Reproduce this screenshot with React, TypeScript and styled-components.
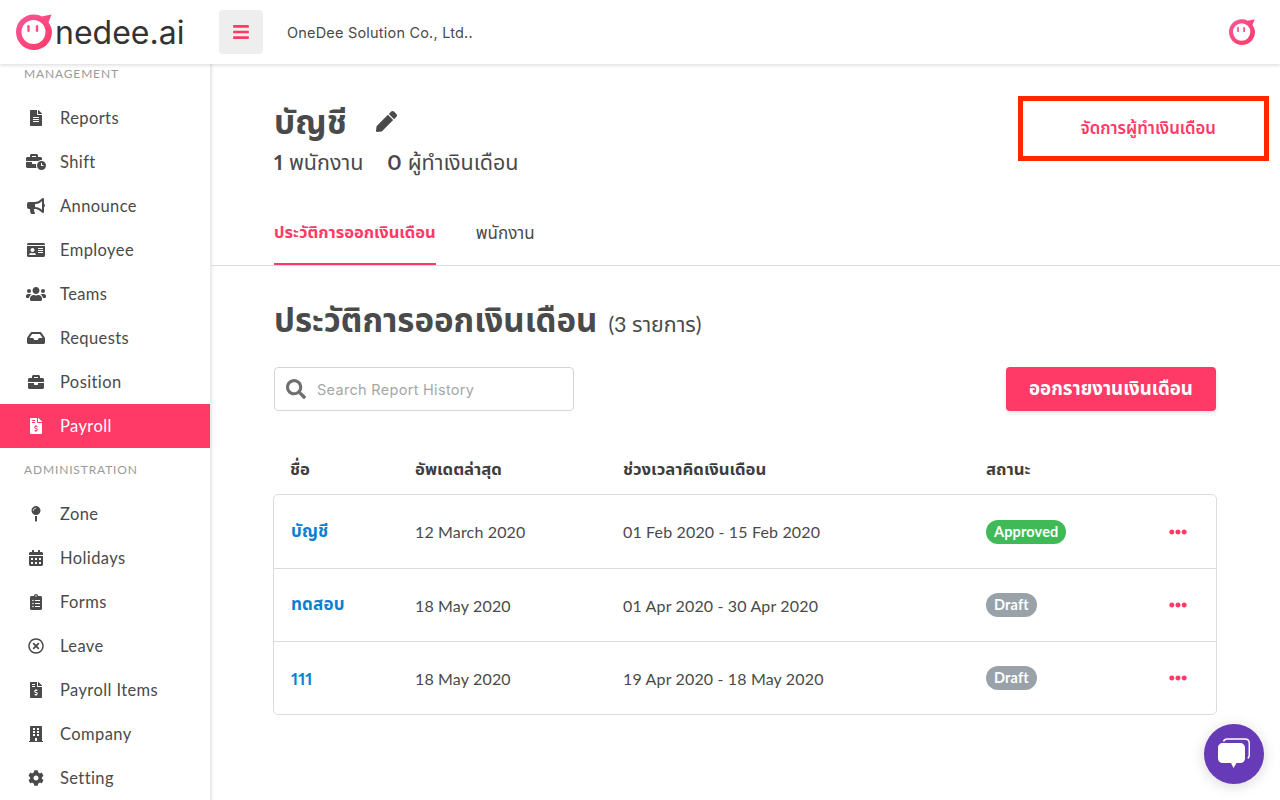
import styled, { createGlobalStyle } from "styled-components";
import type { IconType } from "react-icons";
import {
  FaBars,
  FaBriefcase,
  FaBullhorn,
  FaBuilding,
  FaBusinessTime,
  FaCalendarAlt,
  FaClipboardList,
  FaCog,
  FaEllipsisH,
  FaFileAlt,
  FaFileInvoiceDollar,
  FaIdCard,
  FaInbox,
  FaMapPin,
  FaPen,
  FaRegTimesCircle,
  FaSearch,
  FaUsers,
} from "react-icons/fa";

const PINK = "#ff3a66";
const FONT = `"Lato", "Noto Sans", "Noto Sans Thai", sans-serif`;

const GlobalStyle = createGlobalStyle`
  html, body {
    margin: 0;
    height: 100%;
    overflow: hidden;
    background: #fff;
    font-family: ${FONT};
    color: #4a4a4a;
  }
  * {
    box-sizing: border-box;
  }
`;

const Page = styled.div`
  position: relative;
  display: flex;
  flex-direction: column;
  height: 800px;
  overflow: hidden;
`;

const Header = styled.header`
  position: relative;
  z-index: 2;
  display: flex;
  align-items: center;
  flex: 0 0 64px;
  padding: 0 25px 0 16px;
  background: #fff;
  box-shadow: 0 1px 4px rgba(0, 0, 0, 0.16);
`;

const Logo = styled.div`
  display: flex;
  align-items: center;
  width: 203px;
`;

const LogoText = styled.span`
  margin-left: 3px;
  font-family: "Inter", sans-serif;
  font-size: 32px;
  font-weight: 400;
  color: #333;
`;

const MenuButton = styled.button`
  display: flex;
  align-items: center;
  justify-content: center;
  width: 44px;
  height: 44px;
  padding: 0;
  border: 0;
  border-radius: 4px;
  background: #eeeeee;
  color: ${PINK};
  font-size: 18px;
`;

const CompanyName = styled.span`
  margin-left: 24px;
  font-family: "Inter", sans-serif;
  font-size: 14.5px;
  letter-spacing: 0.2px;
  color: #4a4a4a;
`;

const HeaderAvatar = styled.div`
  display: flex;
  margin-left: auto;
`;

const Body = styled.div`
  display: flex;
  flex: 1;
  min-height: 0;
`;

const Sidebar = styled.nav`
  flex: 0 0 211px;
  overflow: hidden;
  background: #fff;
  border-right: 1px solid #eaeaea;
  box-shadow: 1px 0 3px rgba(0, 0, 0, 0.1);
`;

const SectionLabel = styled.div<{ $first?: boolean }>`
  display: flex;
  align-items: center;
  height: ${({ $first }) => ($first ? "32px" : "44px")};
  padding: ${({ $first }) => ($first ? "0 0 13px 24px" : "0 0 2px 24px")};
  font-size: 12px;
  letter-spacing: 0.85px;
  color: #9a9a9a;
`;

const NavItem = styled.div<{ $active?: boolean }>`
  display: flex;
  align-items: center;
  height: 44px;
  padding-left: 26px;
  font-size: 16.5px;
  letter-spacing: 0.4px;
  background: ${({ $active }) => ($active ? PINK : "transparent")};
  color: ${({ $active }) => ($active ? "#fff" : "#4a4a4a")};
`;

const NavIcon = styled.span<{ $size: number }>`
  display: flex;
  align-items: center;
  justify-content: center;
  flex: 0 0 20px;
  margin-right: 14px;
  font-size: ${({ $size }) => $size}px;
`;

const Main = styled.main`
  flex: 1;
  min-width: 0;
`;

const Summary = styled.section`
  display: flex;
  justify-content: space-between;
  padding: 34px 64px 0 63px;
`;

const TitleRow = styled.div`
  display: flex;
  align-items: center;
  height: 46px;
`;

const Title = styled.h1`
  margin: 0;
  font-size: 33.5px;
  line-height: 46px;
  font-weight: 700;
  color: #4a4a4a;
`;

const EditIcon = styled.span`
  display: flex;
  margin-left: 29px;
  font-size: 21px;
  color: #4a4a4a;
`;

const Stats = styled.div`
  display: flex;
  gap: 24px;
  margin-top: 3px;
  font-size: 21.5px;
  line-height: 30px;
  font-variant-numeric: proportional-nums;
`;

const Stat = styled.span`
  strong {
    font-weight: 700;
    margin-right: 6px;
  }
`;

const ManageLink = styled.a`
  padding-top: 18px;
  font-size: 16.75px;
  font-weight: 600;
  color: ${PINK};
`;

const Tabs = styled.div`
  display: flex;
  gap: 40px;
  height: 66px;
  margin-top: 23px;
  padding-left: 63px;
  border-bottom: 1px solid #dcdcdc;
`;

const Tab = styled.div<{ $active?: boolean }>`
  display: flex;
  align-items: center;
  height: 65px;
  padding-top: 2px;
  margin-bottom: -1px;
  font-size: ${({ $active }) => ($active ? "16.5px" : "17px")};
  font-weight: ${({ $active }) => ($active ? 700 : 400)};
  color: ${({ $active }) => ($active ? PINK : "#4a4a4a")};
  border-bottom: ${({ $active }) => ($active ? `2px solid ${PINK}` : "0")};
`;

const Content = styled.section`
  padding: 31px 64px 0 63px;
`;

const SectionTitle = styled.div`
  display: flex;
  align-items: baseline;
  gap: 11px;
  height: 46px;
`;

const Heading = styled.h2`
  margin: 0;
  font-size: 33px;
  font-weight: 700;
  color: #4a4a4a;
`;

const Count = styled.span`
  font-size: 21.4px;
  color: #4a4a4a;
`;

const Toolbar = styled.div`
  display: flex;
  justify-content: space-between;
  margin-top: 24px;
`;

const SearchBox = styled.label`
  display: flex;
  align-items: center;
  width: 300px;
  height: 44px;
  padding-left: 11px;
  border: 1px solid #d5d5d5;
  border-radius: 4px;
  font-size: 20px;
  color: #6f6f6f;
`;

const SearchInput = styled.input`
  flex: 1;
  min-width: 0;
  margin-left: 9px;
  border: 0;
  outline: 0;
  background: transparent;
  font-family: "Inter", sans-serif;
  font-size: 14.5px;
  letter-spacing: 0.3px;

  &::placeholder {
    color: #a6a6a6;
    opacity: 1;
  }
`;

const PrimaryButton = styled.button`
  width: 210px;
  height: 44px;
  border: 0;
  border-radius: 4px;
  background: ${PINK};
  color: #fff;
  font-family: ${FONT};
  font-size: 18.7px;
  font-weight: 700;
  box-shadow: 0 2px 4px rgba(0, 0, 0, 0.12);
`;

const TableHead = styled.div`
  display: grid;
  grid-template-columns: 125px 208px 363px 1fr;
  align-items: center;
  height: 83px;
  padding: 35px 0 0 16px;
  font-size: 16.7px;
  font-weight: 700;
  color: #3d3d3d;
`;

const Table = styled.div`
  margin-left: -1px;
  margin-right: -1px;
  border: 1px solid #dcdcdc;
  border-radius: 5px;
`;

const Row = styled.div`
  display: grid;
  grid-template-columns: 124px 208px 363px 183px 1fr;
  align-items: center;
  height: 73px;
  padding: 0 30px 0 17px;
  font-size: 16px;
  letter-spacing: 0.15px;
  color: #4a4a4a;

  & + & {
    border-top: 1px solid #dcdcdc;
  }
`;

const NameLink = styled.a`
  font-size: 17px;
  font-weight: 700;
  font-variant-numeric: proportional-nums;
  color: #0b7fd1;
`;

const Badge = styled.span<{ $color: string }>`
  justify-self: start;
  padding: 0 8px;
  height: 24px;
  line-height: 23px;
  border-radius: 12px;
  background: ${({ $color }) => $color};
  color: #fff;
  font-size: 14.5px;
  font-weight: 700;
`;

const RowMenu = styled.span`
  display: flex;
  justify-self: end;
  color: ${PINK};
  font-size: 18px;
`;

const RedFrame = styled.div`
  position: absolute;
  top: 96px;
  left: 1018px;
  width: 251px;
  height: 65px;
  border: 5px solid #ff2600;
`;

const ChatBubble = styled.div`
  position: absolute;
  right: 16px;
  bottom: 16px;
  display: flex;
  align-items: center;
  justify-content: center;
  width: 60px;
  height: 60px;
  border-radius: 50%;
  background: #673ab7;
  box-shadow: 0 2px 14px rgba(0, 0, 0, 0.16);
`;

const Face = ({ size }: { size: number }) => (
  <svg width={size} height={size} viewBox="0 0 36 36">
    <defs>
      <linearGradient id="faceRing" x1="0" y1="0" x2="1" y2="1">
        <stop offset="0" stopColor="#f9569a" />
        <stop offset="1" stopColor="#ff3a66" />
      </linearGradient>
    </defs>
    <path
      d="M18 0.500c2.700 0 5.300 0.700 7.600 1.900L35.500 0.500l-3 8C34.500 11.200 36 14.500 36 18c0 9.900-8 18-18 18S0 27.900 0 18 8 0.500 18 0.500z"
      fill="url(#faceRing)"
    />
    <circle cx="17.500" cy="18" r="12" fill="#fff" />
    <rect x="11.300" y="11" width="2.400" height="7" rx="1.200" fill="#ff4d80" />
    <rect x="19.800" y="11" width="2.400" height="7" rx="1.200" fill="#ff4d80" />
  </svg>
);

const ChatIcon = () => (
  <svg width="32" height="32" viewBox="0 0 32 32">
    <path
      d="M5.500 3.500C6 1.800 7.500 1 9.500 1H27c2.800 0 4.300 1.800 4.300 4.500V17c0 1.400-0.500 2.600-1.500 3.300"
      fill="none"
      stroke="#fff"
      strokeWidth="1.500"
    />
    <path
      d="M5 5h17c3 0 5 2 5 5v10c0 3-2 5-5 5h-3.500L15.500 30 13 25H5c-3 0-5-2-5-5V10c0-3 2-5 5-5z"
      fill="#fff"
    />
  </svg>
);

type NavEntry = { label: string; icon: IconType; size?: number; active?: boolean };

const managementItems: NavEntry[] = [
  { label: "Reports", icon: FaFileAlt },
  { label: "Shift", icon: FaBusinessTime, size: 20 },
  { label: "Announce", icon: FaBullhorn, size: 18 },
  { label: "Employee", icon: FaIdCard, size: 18 },
  { label: "Teams", icon: FaUsers, size: 20 },
  { label: "Requests", icon: FaInbox, size: 18 },
  { label: "Position", icon: FaBriefcase },
  { label: "Payroll", icon: FaFileInvoiceDollar, active: true },
];

const adminItems: NavEntry[] = [
  { label: "Zone", icon: FaMapPin },
  { label: "Holidays", icon: FaCalendarAlt },
  { label: "Forms", icon: FaClipboardList },
  { label: "Leave", icon: FaRegTimesCircle },
  { label: "Payroll Items", icon: FaFileInvoiceDollar },
  { label: "Company", icon: FaBuilding },
  { label: "Setting", icon: FaCog },
];

const reports = [
  { name: "บัญชี", updated: "12 March 2020", period: "01 Feb 2020 - 15 Feb 2020", status: "Approved" },
  { name: "ทดสอบ", updated: "18 May 2020", period: "01 Apr 2020 - 30 Apr 2020", status: "Draft" },
  { name: "111", updated: "18 May 2020", period: "19 Apr 2020 - 18 May 2020", status: "Draft" },
];

const renderNav = (items: NavEntry[]) =>
  items.map(({ label, icon: Icon, size = 16, active }) => (
    <NavItem key={label} $active={active}>
      <NavIcon $size={size}>
        <Icon />
      </NavIcon>
      {label}
    </NavItem>
  ));

const App = () => (
  <Page>
    <GlobalStyle />
    <Header>
      <Logo>
        <Face size={36} />
        <LogoText>nedee.ai</LogoText>
      </Logo>
      <MenuButton>
        <FaBars />
      </MenuButton>
      <CompanyName>OneDee Solution Co., Ltd..</CompanyName>
      <HeaderAvatar>
        <Face size={26} />
      </HeaderAvatar>
    </Header>
    <Body>
      <Sidebar>
        <SectionLabel $first>MANAGEMENT</SectionLabel>
        {renderNav(managementItems)}
        <SectionLabel>ADMINISTRATION</SectionLabel>
        {renderNav(adminItems)}
      </Sidebar>
      <Main>
        <Summary>
          <div>
            <TitleRow>
              <Title>บัญชี</Title>
              <EditIcon>
                <FaPen />
              </EditIcon>
            </TitleRow>
            <Stats>
              <Stat>
                <strong>1</strong>พนักงาน
              </Stat>
              <Stat>
                <strong>0</strong>ผู้ทำเงินเดือน
              </Stat>
            </Stats>
          </div>
          <ManageLink>จัดการผู้ทำเงินเดือน</ManageLink>
        </Summary>
        <Tabs>
          <Tab $active>ประวัติการออกเงินเดือน</Tab>
          <Tab>พนักงาน</Tab>
        </Tabs>
        <Content>
          <SectionTitle>
            <Heading>ประวัติการออกเงินเดือน</Heading>
            <Count>(3 รายการ)</Count>
          </SectionTitle>
          <Toolbar>
            <SearchBox>
              <FaSearch />
              <SearchInput placeholder="Search Report History" />
            </SearchBox>
            <PrimaryButton>ออกรายงานเงินเดือน</PrimaryButton>
          </Toolbar>
          <TableHead>
            <span>ชื่อ</span>
            <span>อัพเดตล่าสุด</span>
            <span>ช่วงเวลาคิดเงินเดือน</span>
            <span>สถานะ</span>
          </TableHead>
          <Table>
            {reports.map((report) => (
              <Row key={report.name}>
                <NameLink>{report.name}</NameLink>
                <span>{report.updated}</span>
                <span>{report.period}</span>
                <Badge $color={report.status === "Approved" ? "#3fba57" : "#98a2a8"}>{report.status}</Badge>
                <RowMenu>
                  <FaEllipsisH />
                </RowMenu>
              </Row>
            ))}
          </Table>
        </Content>
      </Main>
    </Body>
    <RedFrame />
    <ChatBubble>
      <ChatIcon />
    </ChatBubble>
  </Page>
);

export default App;
